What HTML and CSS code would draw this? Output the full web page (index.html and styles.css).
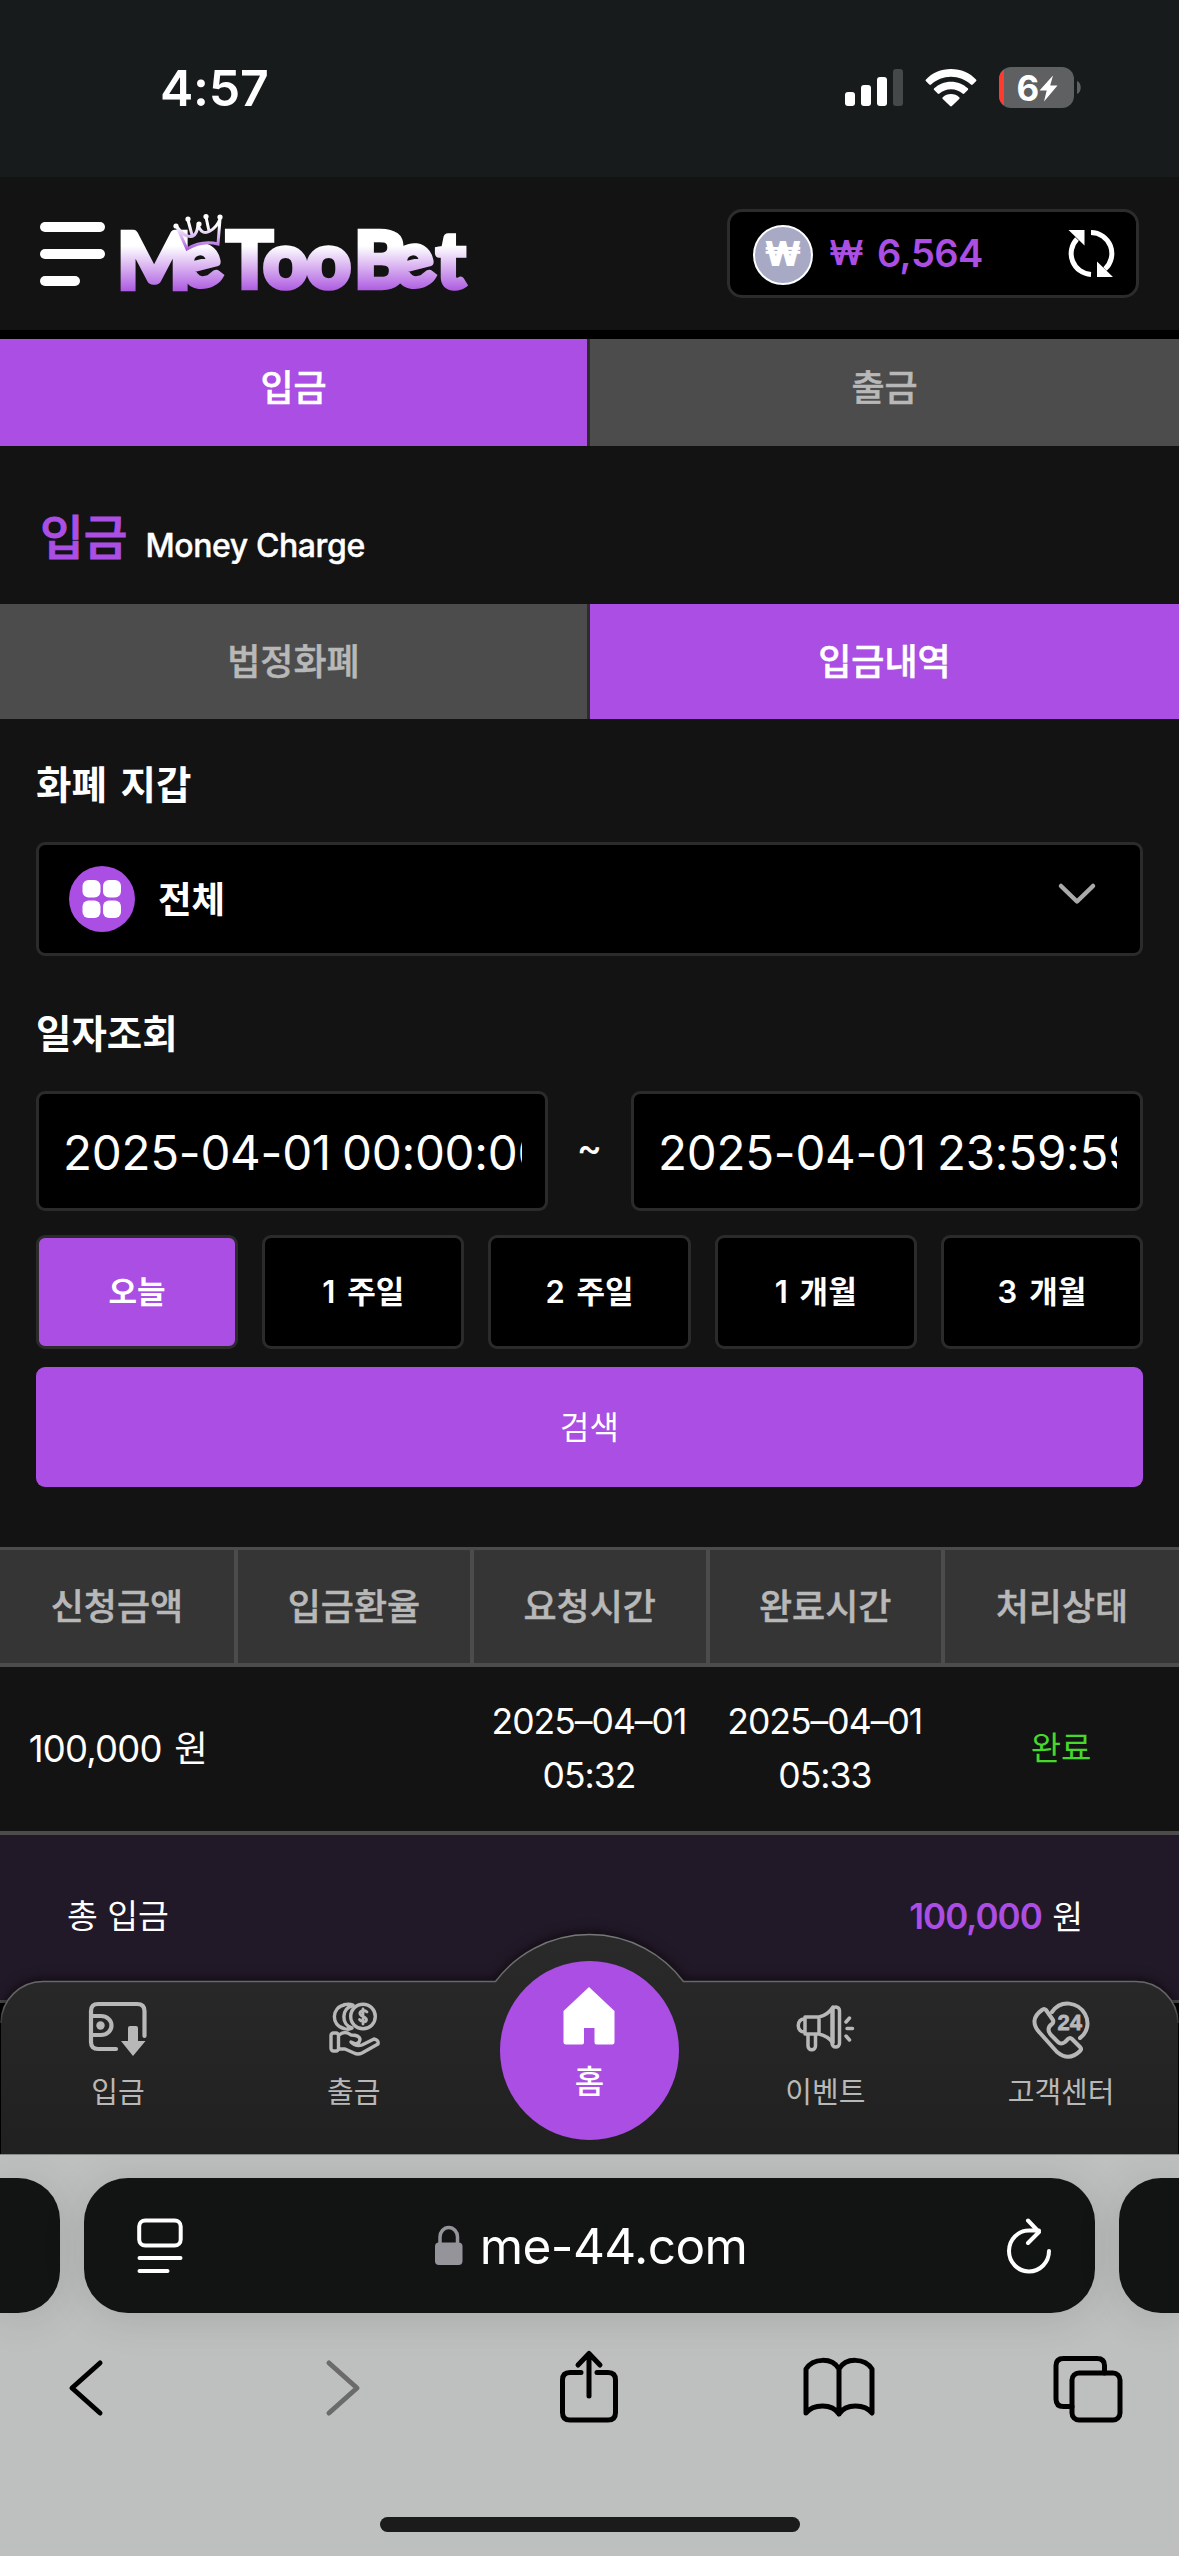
FILE: index.html
```html
<!DOCTYPE html>
<html lang="ko">
<head>
<meta charset="utf-8">
<meta name="viewport" content="width=device-width">
<title>MeTooBet</title>
<link rel="stylesheet" href="styles.css">
</head>
<body>
<div class="status">
  <span class="clock">4:57</span>
  <div class="status-icons">
    <svg class="signal" width="58" height="38" viewBox="0 0 58 38"><g fill="#fff"><rect x="0" y="23" width="10" height="14" rx="3"/><rect x="16" y="16" width="10" height="21" rx="3"/><rect x="32" y="8" width="10" height="29" rx="3"/></g><rect x="48" y="0" width="10" height="37" rx="3" fill="#46494a"/></svg>
    <svg class="wifi" width="52" height="38" viewBox="0 0 52 38" fill="#fff"><path d="M26 0C36 0 45 4 51 10.500c.6.6.6 1.200 0 1.800l-3.300 3.300c-.6.600-1.200.6-1.800 0C40.500 10.500 33.500 7.700 26 7.700S11.500 10.500 6.100 15.600c-.6.600-1.200.600-1.800 0L1 12.300c-.6-.600-.6-1.200 0-1.800C7 4 16 0 26 0z"/><path d="M26 12.700c6.500 0 12.400 2.500 16.800 6.600.6.600.6 1.200 0 1.800l-3.500 3.500c-.6.600-1.200.6-1.800 0-3-2.700-7-4.300-11.500-4.300s-8.500 1.600-11.500 4.300c-.6.600-1.200.6-1.800 0l-3.500-3.500c-.6-.600-.6-1.200 0-1.800 4.400-4.100 10.300-6.600 16.800-6.600z"/><path d="M26 25c3.100 0 6 1.200 8.200 3.200.6.600.6 1.200 0 1.800l-7.300 7.100c-.6.600-1.200.600-1.800 0L17.800 30c-.6-.600-.6-1.200 0-1.800C20 26.200 22.900 25 26 25z"/></svg>
    <svg class="battery" width="83" height="42" viewBox="0 0 83 42"><rect width="75" height="41" rx="12" fill="#5e6061"/><path d="M5 2.400V38.600A12 12 0 0 1 0 29V12A12 12 0 0 1 5 2.400z" fill="#ff3b30"/><path d="M78 14c5 1.500 5 11.500 0 13z" fill="#5e6061"/><text x="17.500" y="33.500" class="battery-level">6</text><path d="M54 8.500L40.500 23.500h7.200L45 34.500 58.500 18.500h-7.300z" fill="#fff"/></svg>
  </div>
</div>

<div class="site">
  <header class="header">
    <div class="brand">
      <div class="menu"><i></i><i></i><i></i></div>
      <svg class="logo" width="350" height="84" viewBox="0 0 350 84">
        <defs>
          <linearGradient id="g" gradientUnits="userSpaceOnUse" x1="0" y1="32" x2="0" y2="78"><stop offset="0" stop-color="#fff"/><stop offset="1" stop-color="#ab57e0"/></linearGradient>
          <linearGradient id="c" gradientUnits="userSpaceOnUse" x1="0" y1="12" x2="0" y2="36"><stop offset="0" stop-color="#fff"/><stop offset="1" stop-color="#a758dd"/></linearGradient>
        </defs>
        <text class="logo-text" x="-3 65 106 143 186 234 278 316" y="75 77 74 74 74 74 77 74" rotate="0 -14 0 0 0 0 -14 0" fill="url(#g)" stroke="url(#g)">MeTooBet</text>
        <path d="M57 13L67 35Q82 26 98 30L100 5M57 13Q66 25 73 22 77 20 78 11 82 22 90 17 97 13 100 5M68 6L72 21M86 3L89 17" fill="none" stroke="url(#c)" stroke-width="3"/>
        <g fill="#fff"><circle cx="56" cy="12" r="2.600"/><circle cx="68" cy="5" r="2.600"/><circle cx="79" cy="10" r="2.600"/><circle cx="86" cy="2.600" r="2.600"/><circle cx="100" cy="3" r="2.600"/></g>
      </svg>
    </div>
    <div class="balance">
      <span class="coin">₩</span>
      <span class="won">₩</span><span class="amount">6,564</span>
      <svg class="refresh" width="48" height="48" viewBox="0 0 48 48"><path d="M24 44.500A21 21 0 0 1 10 9M24 2.500A21 21 0 0 1 38 39" fill="none" stroke="#fff" stroke-width="5"/><path d="M1.500 0H17.500V15.500zM46 47H30V31.500z" fill="#fff"/></svg>
    </div>
  </header>

  <nav class="tabs tabs-main"><a class="on">입금</a><a>출금</a></nav>
  <h1 class="title">입금<small>Money Charge</small></h1>
  <nav class="tabs tabs-sub"><a>법정화폐</a><a class="on">입금내역</a></nav>

  <section class="filter">
    <h2>화폐 지갑</h2>
    <div class="select">
      <svg width="66" height="66" viewBox="0 0 66 66"><circle cx="33" cy="33" r="33" fill="#ab4ee3"/><g fill="#fff"><rect x="13.500" y="14" width="18" height="17.500" rx="6"/><rect x="34" y="14" width="18" height="17.500" rx="6"/><rect x="13.500" y="34.500" width="18" height="17.500" rx="6"/><rect x="34" y="34.500" width="18" height="17.500" rx="6"/></g></svg>
      <span>전체</span>
      <svg class="chevron" width="38" height="24" viewBox="0 0 38 24"><path d="M3 3L19 18.500 35 3" fill="none" stroke="#aaa" stroke-width="4.500" stroke-linecap="round" stroke-linejoin="round"/></svg>
    </div>
    <h2 class="date-title">일자조회</h2>
    <div class="dates">
      <div class="date"><span>2025-04-01 00:00:00</span></div>
      <b>~</b>
      <div class="date"><span>2025-04-01 23:59:59</span></div>
    </div>
    <div class="ranges"><button class="on">오늘</button><button>1 주일</button><button>2 주일</button><button>1 개월</button><button>3 개월</button></div>
    <button class="search">검색</button>
  </section>

  <div class="table">
    <div class="thead"><span>신청금액</span><span>입금환율</span><span>요청시간</span><span>완료시간</span><span>처리상태</span></div>
    <div class="row">
      <span class="money">100,000 원</span><span></span>
      <span class="time">2025–04–01<br>05:32</span>
      <span class="time">2025–04–01<br>05:33</span>
      <span class="done">완료</span>
    </div>
    <div class="total"><span>총 입금</span><span><em>100,000</em> 원</span></div>
  </div>

  <nav class="dock">
    <svg class="dock-shape" width="1179" height="240" viewBox="0 0 1179 240">
      <defs>
        <linearGradient id="d" x1="0" y1="0" x2="0" y2="1"><stop offset="0" stop-color="#2a2a2a"/><stop offset="1" stop-color="#202020"/></linearGradient>
        <linearGradient id="s" gradientUnits="userSpaceOnUse" x1="0" y1="20" x2="0" y2="120"><stop offset="0" stop-color="#777"/><stop offset=".7" stop-color="#606060"/><stop offset="1" stop-color="#202020"/></linearGradient>
      </defs>
      <path class="dock-glow" d="M1 240V109A42 42 0 0 1 43 67H495.500A117.500 117.500 0 0 1 683.500 67H1136A42 42 0 0 1 1178 109V240z" fill="url(#d)"/>
      <path d="M1 109A42 42 0 0 1 43 67.500H495.500A117.500 117.500 0 0 1 683.500 67.500H1136A42 42 0 0 1 1178 109" fill="none" stroke="url(#s)" stroke-width="1.500"/>
    </svg>
    <div class="dock-items">
      <a><svg width="58" height="58" viewBox="0 0 58 58" fill="none" stroke="#b8b8b8" stroke-width="4.200" stroke-linecap="round"><path d="M27 47H9Q2 47 2 40V9Q2 2 9 2H48Q55.500 2 55.500 9V34M2 14H12A10.500 9.500 0 0 1 12 33H2"/><circle cx="11.500" cy="23.500" r="4.200" fill="#b8b8b8" stroke="none"/><path d="M39 26Q39 24 41 24H47Q49 24 49 26V39H56.500L44 54 32 39H39z" fill="#b8b8b8" stroke="none"/></svg><span>입금</span></a>
      <a><svg width="58" height="58" viewBox="0 0 58 58" fill="none" stroke="#b8b8b8" stroke-width="3.400" stroke-linecap="round" stroke-linejoin="round"><circle cx="38" cy="14.500" r="12.300"/><path d="M28 3.500C16 6 16 23 27 26M20 2.700C6 5 6 24 19 26.500M28 3Q24 1.500 19 2.700M27 26.300Q23 28 19 26.500"/><path d="M42 10C39 7 34 9 35 12S42 15 41.500 18 36 20 34.500 17.500M38 7V22" stroke-width="2.800"/><rect x="6" y="31" width="7.500" height="18" rx="2.500"/><path d="M14 33Q20 28 26 33 34 33 35 37 35 41 31 42L26 40Q31 45 37 43L49 37Q54 38 53 42L37 51Q33 53 29 51L20 47H14"/></svg><span>출금</span></a>
      <a class="home"><svg width="52" height="58" viewBox="0 0 52 58"><path d="M26 0L51.500 24V55Q51.500 57.500 49 57.500H33.500Q31.500 57.500 31.500 55.500V41H21V55.500Q21 57.500 19 57.500H3Q.5 57.500.5 55V24z" fill="#fff"/></svg><span>홈</span></a>
      <a><svg width="60" height="58" viewBox="0 0 60 58" fill="none" stroke="#b8b8b8" stroke-width="3.500" stroke-linecap="round" stroke-linejoin="round"><path d="M10 15H24Q33 13 38 5V41Q33 34 24 32H10zM24 15V32M10 17C1 16 1 31 10 30M13 33V44A3.700 3.700 0 0 0 20.500 44V33"/><rect x="37" y="5" width="7.500" height="40" rx="3.700"/><path d="M51 20L54.500 16M52 26.500H57.500M51 34L54.500 38"/></svg><span>이벤트</span></a>
      <a><svg width="58" height="58" viewBox="0 2 58 58" fill="none" stroke="#b8b8b8" stroke-width="4" stroke-linecap="round" stroke-linejoin="round"><path d="M20 12C29-1 46 2 53 14 58 23 55 33 48 38"/><path d="M10 10Q12 8 14 10L21 20Q22 22 20 24 13 29 20 36L26 42Q29 45 33 42L36 39Q38 37 40 39L48 47Q50 49 48 51 37 62 25 52L8 33Q-4 20 10 10z"/><text x="25.500" y="29.500" class="badge24">24</text></svg><span>고객센터</span></a>
    </div>
  </nav>
</div>

<footer class="browser">
  <div class="urls">
    <div class="side side-left"></div>
    <div class="url">
      <svg width="46" height="56" viewBox="0 0 46 56" fill="none" stroke="#fff" stroke-width="4" stroke-linecap="round"><rect x="2.200" y="2.500" width="41.500" height="25" rx="6"/><path d="M2.500 40H43.500M2.500 53H30.500"/></svg>
      <div class="host"><svg width="28" height="40" viewBox="0 0 28 40"><rect y="16.500" width="27.500" height="22.500" rx="4" fill="#95949b"/><path d="M5 18V11A8.700 9.500 0 0 1 22.500 11V18" fill="none" stroke="#95949b" stroke-width="3.500"/></svg><span>me-44.com</span></div>
      <svg width="46" height="56" viewBox="0 0 46 56" fill="none" stroke="#fff" stroke-width="4" stroke-linecap="round" stroke-linejoin="round"><path d="M43 33A20 20.500 0 1 1 23 12.500H33M22 2.500L33 14 22 25"/></svg>
    </div>
    <div class="side side-right"></div>
  </div>
  <div class="tools">
    <svg width="74" height="74" viewBox="0 0 74 74" stroke="#000"><path d="M50 12L22 37 50 62"/></svg>
    <svg width="74" height="74" viewBox="0 0 74 74" stroke="#6b6b6b"><path d="M29 12L57 37 29 62"/></svg>
    <svg width="74" height="74" viewBox="-1 0 74 74" stroke="#000"><path d="M29 21.500H18Q10.500 21.500 10.500 29V61.500Q10.500 69 18 69H56Q63.500 69 63.500 61.500V29Q63.500 21.500 56 21.500H45M37 45V2.500M26 14L37 2.500 48 14"/></svg>
    <svg width="74" height="74" viewBox="-1 0 74 74" stroke="#000"><path d="M37 18C30 6 11 7 4 18V62C11 53 30 52 37 63 44 52 63 53 70 62V18C63 7 44 6 37 18V63"/></svg>
    <svg width="74" height="74" viewBox="0 0 74 74" stroke="#000"><rect x="21" y="22" width="48" height="47" rx="7"/><path d="M21 55.500H12.500Q5 55.500 5 48V14.500Q5 7.500 12.500 7.500H46Q53.500 7.500 53.500 14.500V22"/></svg>
  </div>
  <div class="indicator"></div>
</footer>
</body>
</html>
```
FILE: styles.css
```css
* { box-sizing: border-box; margin: 0; padding: 0; }
body {
  width: 1179px;
  height: 2556px;
  overflow: hidden;
  background: #131313;
  color: #fff;
  font-family: Inter, "Noto Sans CJK KR", sans-serif;
}
svg { display: block; flex: none; overflow: visible; }
button { font: inherit; color: inherit; border: 0; }

.status {
  height: 177px;
  display: flex;
  justify-content: space-between;
  padding: 58px 97px 0 160px;
  background: #171b1c;
}
.clock { font-size: 50px; font-weight: 600; line-height: 60px; letter-spacing: -.2px; }
.status-icons { display: flex; gap: 22px; padding-top: 9px; height: 51px; }
.signal, .wifi { margin-top: 2px; }
.battery-level { font: 700 35px Inter, sans-serif; fill: #fff; }

.site { position: relative; height: 1977px; overflow: hidden; background: #000; }
.header {
  height: 153px;
  display: flex;
  justify-content: space-between;
  padding: 32px 40px 0;
  background: #131313;
}
.brand { display: flex; gap: 15px; }
.menu { display: flex; flex-direction: column; gap: 17.500px; padding-top: 13px; }
.menu i { width: 65px; height: 9.500px; border-radius: 5px; background: #fff; }
.menu i:last-child { width: 40px; }
.logo { margin-top: 5px; }
.logo-text { font: 900 78px Lato, sans-serif; stroke-width: 4.500px; }
.balance {
  width: 412px;
  height: 89px;
  display: flex;
  align-items: center;
  padding: 0 21px 0 23px;
  border: 3px solid #2c2c2c;
  border-radius: 15px;
  background: #000;
}
.coin {
  width: 60px;
  height: 60px;
  margin-top: 3px;
  border: 2px solid #fff;
  border-radius: 50%;
  background: #a8aac5;
  font-size: 34px;
  font-weight: 900;
  line-height: 54px;
  text-align: center;
}
.won, .amount { color: #ab4ee3; font-size: 38px; font-weight: 600; line-height: 48px; margin-top: -2px; }
.won { width: 33px; margin-left: 17px; font-size: 34px; text-align: center; display: flex; justify-content: center; }
.amount { margin-left: 14px; letter-spacing: -.5px; }
.refresh { margin-left: auto; }

.tabs { display: grid; grid-template-columns: 587px 589px; gap: 3px; background: #2c2c2c; }
.tabs a {
  display: flex;
  align-items: center;
  justify-content: center;
  padding-bottom: 5px;
  background: #4c4c4c;
  color: #b8b8b8;
  font-size: 36px;
  font-weight: 500;
  -webkit-text-stroke: .5px;
}
.tabs .on { background: #ab4ee3; color: #fff; }
.tabs-main { margin-top: 9px; height: 107px; }
.tabs-main a { padding-bottom: 15px; }
.tabs-sub { height: 115px; }
.title {
  height: 158px;
  padding: 57px 0 0 40px;
  background: #131313;
  color: #ab4ee3;
  font-size: 47.500px;
  line-height: 70px;
  font-weight: 500;
  -webkit-text-stroke: 1px;
}
.title small {
  position: relative;
  top: 2px;
  margin-left: 18px;
  color: #fff;
  font-size: 32px;
  letter-spacing: -.4px;
  -webkit-text-stroke: .4px;
}

.filter { height: 828px; padding: 38px 36px 0; background: #131313; }
.filter h2 { height: 85px; font-size: 38.500px; font-weight: 600; line-height: 56px; word-spacing: 4px; }
.filter .date-title { margin-top: 50px; }
.select {
  height: 114px;
  display: flex;
  align-items: center;
  gap: 23px;
  padding: 0 44px 0 30px;
  border: 3px solid #2b2b2b;
  border-radius: 9px;
  background: #000;
  font-size: 36.500px;
  font-weight: 600;
}
.select span { padding-bottom: 4px; }
.chevron { margin: 0 0 8px auto; }
.dates { display: grid; grid-template-columns: 512px 83px 512px; height: 120px; align-items: center; }
.dates b { padding-bottom: 9px; text-align: center; font-size: 38px; font-weight: 500; }
.date {
  height: 120px;
  padding: 0 23px 0 24px;
  border: 3px solid #2b2b2b;
  border-radius: 9px;
  background: #000;
  font-size: 47.500px;
  line-height: 117px;
  letter-spacing: -.25px;
  word-spacing: -2px;
}
.date span { display: block; overflow: hidden; white-space: nowrap; }
.ranges { display: grid; grid-template-columns: repeat(5, 1fr); gap: 24px; margin-top: 24px; }
.ranges button {
  height: 114px;
  padding-bottom: 5px;
  border: 3px solid #2b2b2b;
  border-radius: 9px;
  background: #000;
  font-size: 31px;
  font-weight: 600;
  word-spacing: 4px;
}
.ranges .on { background: #ab4ee3; }
.search { width: 100%; height: 120px; padding-bottom: 5px; margin-top: 18px; border-radius: 9px; background: #ab4ee3; font-size: 32px; }

.thead {
  height: 120px;
  display: grid;
  grid-template-columns: 234px 232px 231.500px 231.500px 234px;
  gap: 4px;
  padding: 3px 0 4px;
  background: #4c4c4c;
}
.thead span {
  display: flex;
  align-items: center;
  justify-content: center;
  padding-bottom: 6px;
  background: #353535;
  color: #b8b8b8;
  font-size: 36px;
  font-weight: 500;
  -webkit-text-stroke: .5px;
}
.row {
  height: 168px;
  display: grid;
  grid-template-columns: repeat(5, 1fr);
  align-items: center;
  border-bottom: 4px solid #4c4c4c;
  background: #131313;
  text-align: center;
  white-space: nowrap;
  line-height: 54px;
}
.money { font-size: 36.500px; letter-spacing: -.8px; word-spacing: 3px; }
.time { font-size: 35.500px; letter-spacing: -1px; margin-left: -1px; }
.done { padding-bottom: 2px; color: #46d92c; font-size: 33px; }
.total {
  height: 168px;
  display: flex;
  justify-content: space-between;
  padding: 0 96px 4px 67px;
  border-bottom: 3px solid #4c4c4c;
  background: #221928;
  font-size: 33.500px;
  line-height: 162px;
}
.total em { font-style: normal; font-weight: 600; font-size: 35px; color: #ab4ee3; letter-spacing: -1px; margin-right: 1px; }

.dock { position: absolute; left: 0; bottom: 0; width: 1179px; height: 240px; }
.dock-shape { position: absolute; left: 0; top: 0; }
.dock-glow { filter: drop-shadow(0 -2px 6px rgba(0, 0, 0, .6)); }
.dock-items {
  position: relative;
  height: 240px;
  display: grid;
  grid-template-columns: repeat(5, 1fr);
}
.dock-items a {
  display: flex;
  flex-direction: column;
  align-items: center;
  padding-top: 88px;
  color: #b8b8b8;
  font-size: 29px;
  line-height: 44px;
}
.dock-items span { margin-top: 11px; }
.dock-items .home {
  width: 179px;
  height: 179px;
  margin: 47px auto 0;
  padding-top: 26px;
  border-radius: 50%;
  background: #ab4ee3;
  color: #fff;
  font-size: 32px;
  font-weight: 500;
}
.dock-items .home span { margin-top: 15px; }
.badge24 { font: 700 22px "Liberation Sans", sans-serif; fill: #b8b8b8; stroke-width: .8px; stroke: #b8b8b8; }

.browser { height: 402px; border-top: 1px solid #888; background: #bebfbf; overflow: hidden; }
.urls { display: grid; grid-template-columns: 60px 1011px 60px; gap: 24px; padding-top: 23px; }
.url, .side { height: 135px; background: #121313; box-shadow: 0 4px 44px rgba(0, 0, 0, .12); }
.side-left { border-radius: 0 42px 42px 0; }
.side-right { border-radius: 42px 0 0 42px; }
.url {
  display: flex;
  align-items: center;
  justify-content: space-between;
  padding: 0 43px 0 53px;
  border-radius: 44px;
}
.host { display: flex; align-items: center; gap: 17px; margin-right: 7px; font-size: 49.500px; letter-spacing: -.6px; }
.tools {
  display: flex;
  justify-content: space-between;
  padding: 38px 54px 0 50px;
  fill: none;
  stroke-width: 5px;
  stroke-linecap: round;
  stroke-linejoin: round;
}
.indicator { width: 420px; height: 15px; margin: 92px auto 0; border-radius: 8px; background: #1b1b1b; }
```
